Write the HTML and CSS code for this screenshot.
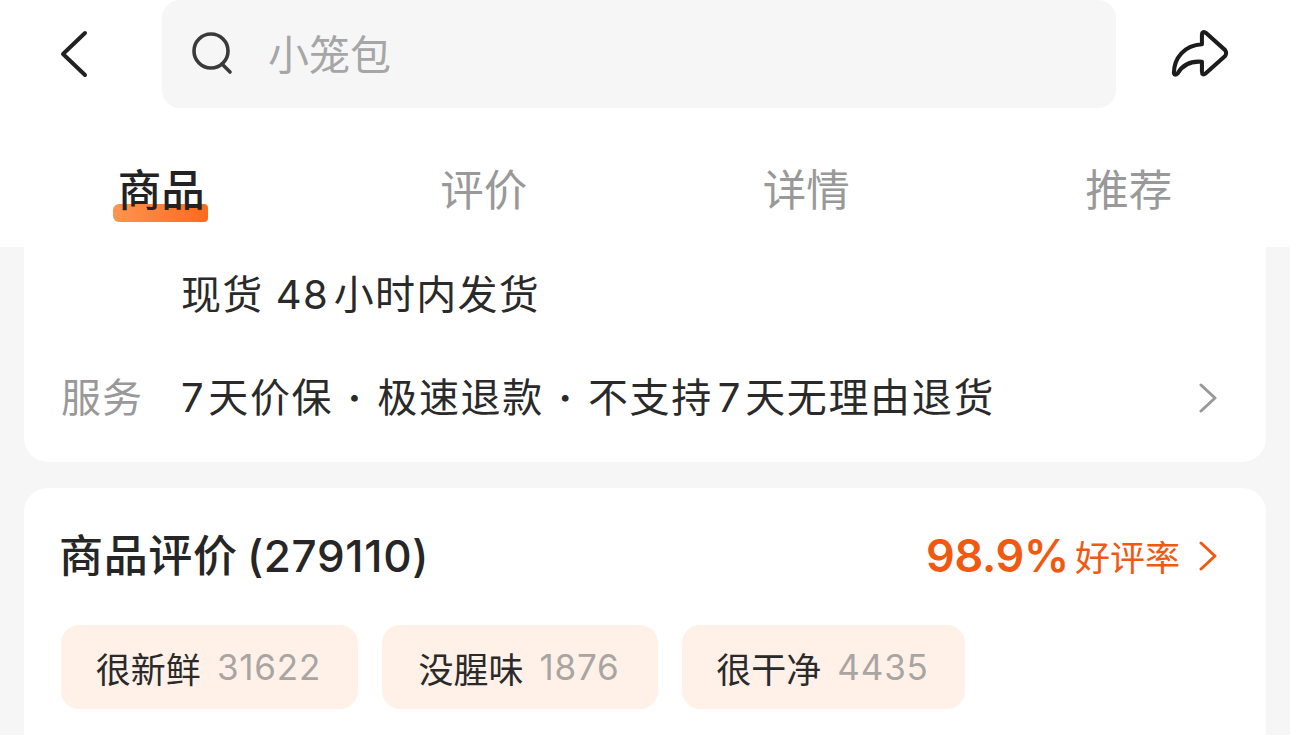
FILE: index.html
```html
<!DOCTYPE html>
<html lang="zh-CN">
<head>
    <meta charset="UTF-8">
    <title>商品详情</title>
    <link rel="stylesheet" href="styles.css">
</head>
<body>
<div class="page">
    <header class="top">
        <div class="nav">
            <svg class="back" width="30" height="50" viewBox="0 0 30 50">
                <path d="M26 4 L4 25 L26 46" fill="none" stroke="#222" stroke-width="4" stroke-linecap="round" stroke-linejoin="round"/>
            </svg>
            <div class="search">
                <svg class="search-icon" width="42" height="44" viewBox="0 0 42 44">
                    <circle cx="20" cy="20" r="17" fill="none" stroke="#3a3a3a" stroke-width="3.6"/>
                    <path d="M31 33 L39 41" fill="none" stroke="#3a3a3a" stroke-width="3.6" stroke-linecap="round"/>
                </svg>
                <span class="search-text">小笼包</span>
            </div>
            <svg class="share" width="60" height="52" viewBox="0 0 60 52">
                <path d="M3 46 C3 30 14 17 32 16 L32 6 Q32 2 36 4 L56 22 Q58 25 56 28 L36 46 Q32 49 32 44 L32 34 C20 33 12 37 7 46 Q4 49 3 46 Z" fill="none" stroke="#1c1c1c" stroke-width="4.2" stroke-linejoin="round"/>
            </svg>
        </div>
        <nav class="tabs">
            <div class="tab tab-on"><span class="tab-line"></span><span class="tab-text">商品</span></div>
            <div class="tab">评价</div>
            <div class="tab">详情</div>
            <div class="tab">推荐</div>
        </nav>
    </header>
    <main class="main">
        <section class="card card-info">
            <div class="ship">现货 <span class="ship-num">48</span>小时内发货</div>
            <div class="service">
                <span class="service-label">服务</span>
                <span class="service-text"><span class="digit">7</span>天价保<span class="dot">·</span>极速退款<span class="dot">·</span>不支持<span class="digit digit-mid">7</span>天无理由退货</span>
                <svg class="arrow" width="18" height="32" viewBox="0 0 18 32">
                    <path d="M2 3 L16 16 L2 29" fill="none" stroke="#999" stroke-width="3" stroke-linecap="round" stroke-linejoin="round"/>
                </svg>
            </div>
        </section>
        <section class="card card-review">
            <div class="review-head">
                <h2 class="review-title">商品评价 (279110)</h2>
                <div class="rate">
                    <span class="rate-num">98.9%</span>
                    <span class="rate-text">好评率</span>
                    <svg class="arrow" width="18" height="32" viewBox="0 0 18 32">
                        <path d="M2 3 L16 16 L2 29" fill="none" stroke="#f0590f" stroke-width="3" stroke-linecap="round" stroke-linejoin="round"/>
                    </svg>
                </div>
            </div>
            <div class="tags">
                <div class="tag">很新鲜<span class="tag-num">31622</span></div>
                <div class="tag">没腥味<span class="tag-num">1876</span></div>
                <div class="tag">很干净<span class="tag-num">4435</span></div>
            </div>
        </section>
    </main>
</div>
</body>
</html>
```

FILE: styles.css
```css
html, body {
    margin: 0;
    height: 100%;
    overflow: hidden;
}
body {
    background: #f6f6f6;
    font-family: Inter, "Noto Sans CJK SC", sans-serif;
    color: #222;
}
.page {
    height: 735px;
    overflow: hidden;
}
.top {
    height: 247px;
    background: #fff;
}
.nav {
    display: flex;
    align-items: center;
    height: 108px;
    padding: 0 61px 0 59px;
}
.back {
    flex: none;
    margin-right: 73px;
}
.search {
    flex: none;
    display: flex;
    align-items: center;
    width: 954px;
    height: 108px;
    margin-right: 55px;
    padding-left: 29px;
    box-sizing: border-box;
    background: #f6f6f6;
    border-radius: 18px;
}
.search-icon {
    margin-right: 35px;
    margin-bottom: 2px;
}
.search-text {
    margin-bottom: 4px;
    font-size: 41px;
    color: #a6a6a6;
}
.tabs {
    display: grid;
    grid-template-columns: repeat(4, 1fr);
    margin-top: 52px;
}
.tab {
    position: relative;
    text-align: center;
    font-size: 43.5px;
    line-height: 60px;
    color: #999;
}
.tab-on {
    font-weight: 500;
    color: #222;
}
.tab-text {
    position: relative;
}
.tab-line {
    position: absolute;
    left: 113px;
    top: 44px;
    width: 95px;
    height: 18px;
    border-radius: 6px 4px 4px 6px;
    background: linear-gradient(90deg, #ff9450, #ff6a1c);
}
.main {
    padding: 0 24px;
}
.card {
    background: #fff;
}
.card-info {
    height: 215px;
    padding: 20px 37px 0;
    border-radius: 0 0 24px 24px;
    box-sizing: border-box;
}
.ship {
    margin-left: 120px;
    font-size: 40px;
    line-height: 56px;
    letter-spacing: 1.2px;
    color: #2a2a2a;
}
.ship-num {
    margin-right: 5px;
}
.service {
    display: flex;
    align-items: center;
    margin-top: 47px;
    font-size: 40px;
    line-height: 56px;
}
.service-label {
    width: 120px;
    letter-spacing: 1px;
    color: #999;
}
.service-text {
    flex: 1;
    letter-spacing: 1.65px;
    color: #2a2a2a;
}
.digit {
    margin-right: 3px;
}
.digit-mid {
    margin-left: 5px;
}
.dot {
    margin: 0 14.5px;
    font-weight: 700;
}
.arrow {
    flex: none;
    margin-right: 12px;
}
.card-review {
    height: 300px;
    margin-top: 26px;
    padding: 33px 37px 0;
    border-radius: 24px 24px 0 0;
}
.review-head {
    display: flex;
    align-items: center;
    justify-content: space-between;
    height: 64px;
}
.review-title {
    margin: 0 0 0 -2px;
    font-size: 44px;
    font-weight: 500;
    letter-spacing: 0.65px;
    word-spacing: -3px;
    color: #262626;
}
.rate {
    display: flex;
    align-items: center;
    margin-top: 5px;
    color: #f0590f;
}
.rate-num {
    font-size: 45px;
    font-weight: 600;
    letter-spacing: -0.3px;
}
.rate-text {
    margin-left: 6px;
    margin-right: 19px;
    font-size: 35px;
}
.tags {
    display: grid;
    grid-template-columns: 297px 276px 283px;
    gap: 24px;
    margin-top: 40px;
}
.tag {
    display: flex;
    align-items: center;
    justify-content: center;
    height: 84px;
    padding-right: 2px;
    box-sizing: border-box;
    border-radius: 18px;
    background: #fff1e8;
    font-size: 35px;
    color: #2a2a2a;
}
.tag-num {
    margin-left: 16px;
    letter-spacing: 0.8px;
    color: #a8a5a2;
}
```
